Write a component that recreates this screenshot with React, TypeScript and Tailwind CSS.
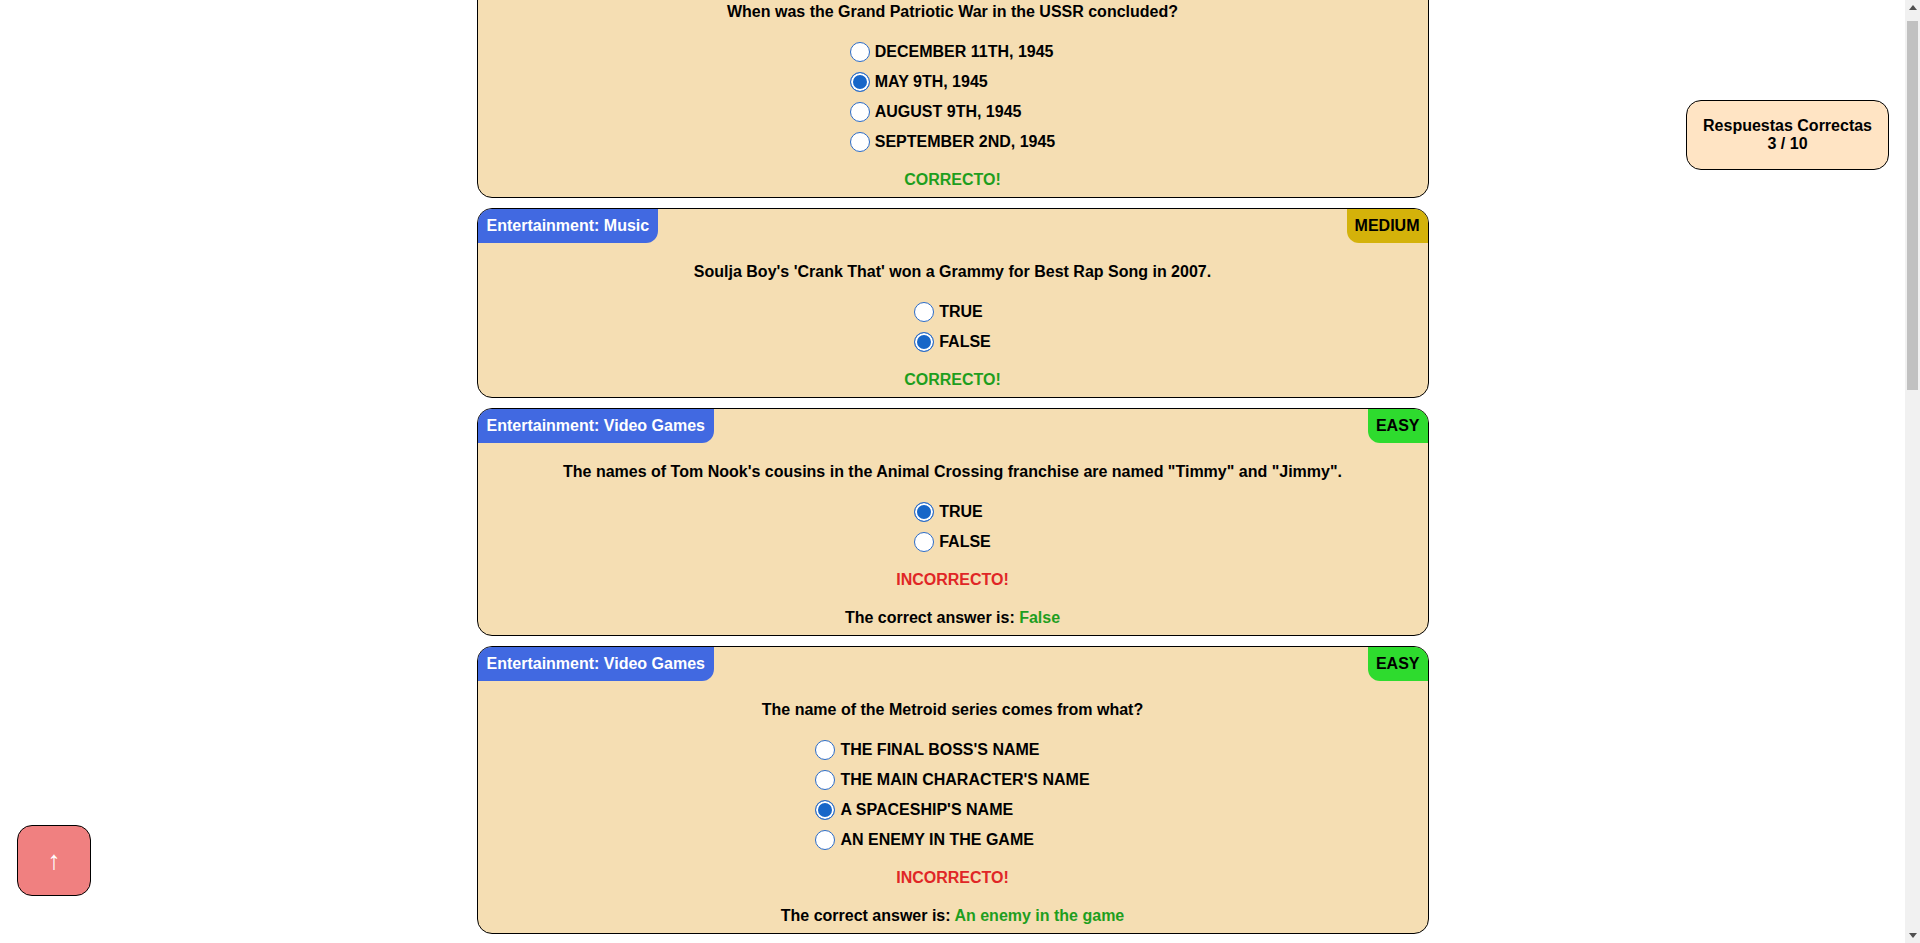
import React from 'react';

interface Question {
  category: string;
  difficulty: 'easy' | 'medium' | 'hard';
  question: string;
  answers: string[];
  selected: string;
  correct: string;
}

const questions: Question[] = [
  {
    category: 'History',
    difficulty: 'easy',
    question: 'When was the Grand Patriotic War in the USSR concluded?',
    answers: ['December 11th, 1945', 'May 9th, 1945', 'August 9th, 1945', 'September 2nd, 1945'],
    selected: 'May 9th, 1945',
    correct: 'May 9th, 1945'
  },
  {
    category: 'Entertainment: Music',
    difficulty: 'medium',
    question: "Soulja Boy's 'Crank That' won a Grammy for Best Rap Song in 2007.",
    answers: ['True', 'False'],
    selected: 'False',
    correct: 'False'
  },
  {
    category: 'Entertainment: Video Games',
    difficulty: 'easy',
    question: 'The names of Tom Nook\'s cousins in the Animal Crossing franchise are named "Timmy" and "Jimmy".',
    answers: ['True', 'False'],
    selected: 'True',
    correct: 'False'
  },
  {
    category: 'Entertainment: Video Games',
    difficulty: 'easy',
    question: 'The name of the Metroid series comes from what?',
    answers: ["The final boss's name", "The main character's name", "A spaceship's name", 'An enemy in the game'],
    selected: "A spaceship's name",
    correct: 'An enemy in the game'
  },
  {
    category: 'Science: Computers',
    difficulty: 'easy',
    question: 'The logo for Snapchat is a Bell.',
    answers: ['True', 'False'],
    selected: 'True',
    correct: 'False'
  },
  {
    category: 'General Knowledge',
    difficulty: 'easy',
    question: 'The color orange is named after the fruit.',
    answers: ['True', 'False'],
    selected: 'True',
    correct: 'True'
  },
  {
    category: 'Geography',
    difficulty: 'medium',
    question: 'Greenland is covered with grass and Iceland covered with ice.',
    answers: ['True', 'False'],
    selected: 'True',
    correct: 'False'
  },
  {
    category: 'Science & Nature',
    difficulty: 'easy',
    question: 'An atom contains a nucleus.',
    answers: ['True', 'False'],
    selected: 'False',
    correct: 'True'
  },
  {
    category: 'Entertainment: Film',
    difficulty: 'medium',
    question: 'The movie "The Nightmare before Christmas" was all done with physical objects.',
    answers: ['True', 'False'],
    selected: 'False',
    correct: 'True'
  },
  {
    category: 'Sports',
    difficulty: 'easy',
    question: 'In golf, a score of one under par is called a bogey.',
    answers: ['True', 'False'],
    selected: 'True',
    correct: 'False'
  }
];

const difficultyColor: Record<Question['difficulty'], string> = {
  easy: 'bg-[#2edb2e]',
  medium: 'bg-[#d4b20a]',
  hard: 'bg-[#e03b3b]'
};

function QuestionCard({ q }: { q: Question }) {
  const isCorrect = q.selected === q.correct;

  return (
    <div className="w-[952px] mx-auto mb-[10px] bg-[#f5deb3] border border-black rounded-[15px] overflow-hidden pb-[8px] text-center">
      <div className="flex justify-between h-[34px]">
        <span className="bg-[#4169e1] text-white px-[9px] flex items-center rounded-br-[12px]">
          {q.category}
        </span>
        <span className={`${difficultyColor[q.difficulty]} text-black uppercase px-[8px] flex items-center rounded-bl-[12px]`}>
          {q.difficulty}
        </span>
      </div>

      <p className="mt-[20px] leading-[18px]">{q.question}</p>

      <div className="mt-4 w-fit mx-auto flex flex-col items-start">
        {q.answers.map(answer => (
          <label key={answer} className="h-[30px] flex items-center uppercase">
            <input
              type="radio"
              name={q.question}
              checked={q.selected === answer}
              readOnly
              className="appearance-none m-0 mr-[5px] w-[20px] h-[20px] rounded-full border-[1.5px] border-[#2a6bc9] bg-white checked:bg-[#1766c8] checked:shadow-[inset_0_0_0_2px_white]"
            />
            {answer}
          </label>
        ))}
      </div>

      {isCorrect ? (
        <p className="mt-[14px] leading-[18px] text-[#1e9e1e]">CORRECTO!</p>
      ) : (
        <>
          <p className="mt-[14px] leading-[18px] text-[#e02626]">INCORRECTO!</p>
          <p className="mt-[20px] leading-[18px]">
            The correct answer is: <span className="text-[#1e9e1e]">{q.correct}</span>
          </p>
        </>
      )}
    </div>
  );
}

function Scrollbar() {
  return (
    <div className="w-[15px] shrink-0 bg-[#f1f1f1] flex flex-col items-center">
      <div className="h-[15px] w-full flex items-center justify-center">
        <svg width="8" height="5" viewBox="0 0 8 5">
          <polygon points="0,5 4,0 8,5" fill="#505050" />
        </svg>
      </div>
      <div className="mt-[6px] w-[11px] h-[369px] bg-[#c1c1c1]" />
      <div className="mt-auto h-[15px] w-full flex items-center justify-center">
        <svg width="8" height="5" viewBox="0 0 8 5">
          <polygon points="0,0 8,0 4,5" fill="#505050" />
        </svg>
      </div>
    </div>
  );
}

export default function App() {
  const score = questions.filter(q => q.selected === q.correct).length;

  return (
    <div className="flex h-screen overflow-hidden bg-white font-['Liberation_Sans',Arial,sans-serif] font-bold text-base text-black">
      <div className="flex-1 overflow-hidden">
        <main className="-mt-[52px] pb-[20px]">
          {questions.map(q => (
            <QuestionCard key={q.question} q={q} />
          ))}
        </main>
      </div>

      <Scrollbar />

      <div className="fixed top-[100px] right-[31px] bg-[#ffe4c4] border border-black rounded-[15px] p-4 leading-[18px] text-center">
        <div>Respuestas Correctas</div>
        <div>{score} / {questions.length}</div>
      </div>

      <button className="fixed left-[17px] bottom-[47px] w-[74px] h-[71px] bg-[#f08080] border border-black rounded-[15px] text-white text-[26px] font-normal flex items-center justify-center">
        ↑
      </button>
    </div>
  );
}
